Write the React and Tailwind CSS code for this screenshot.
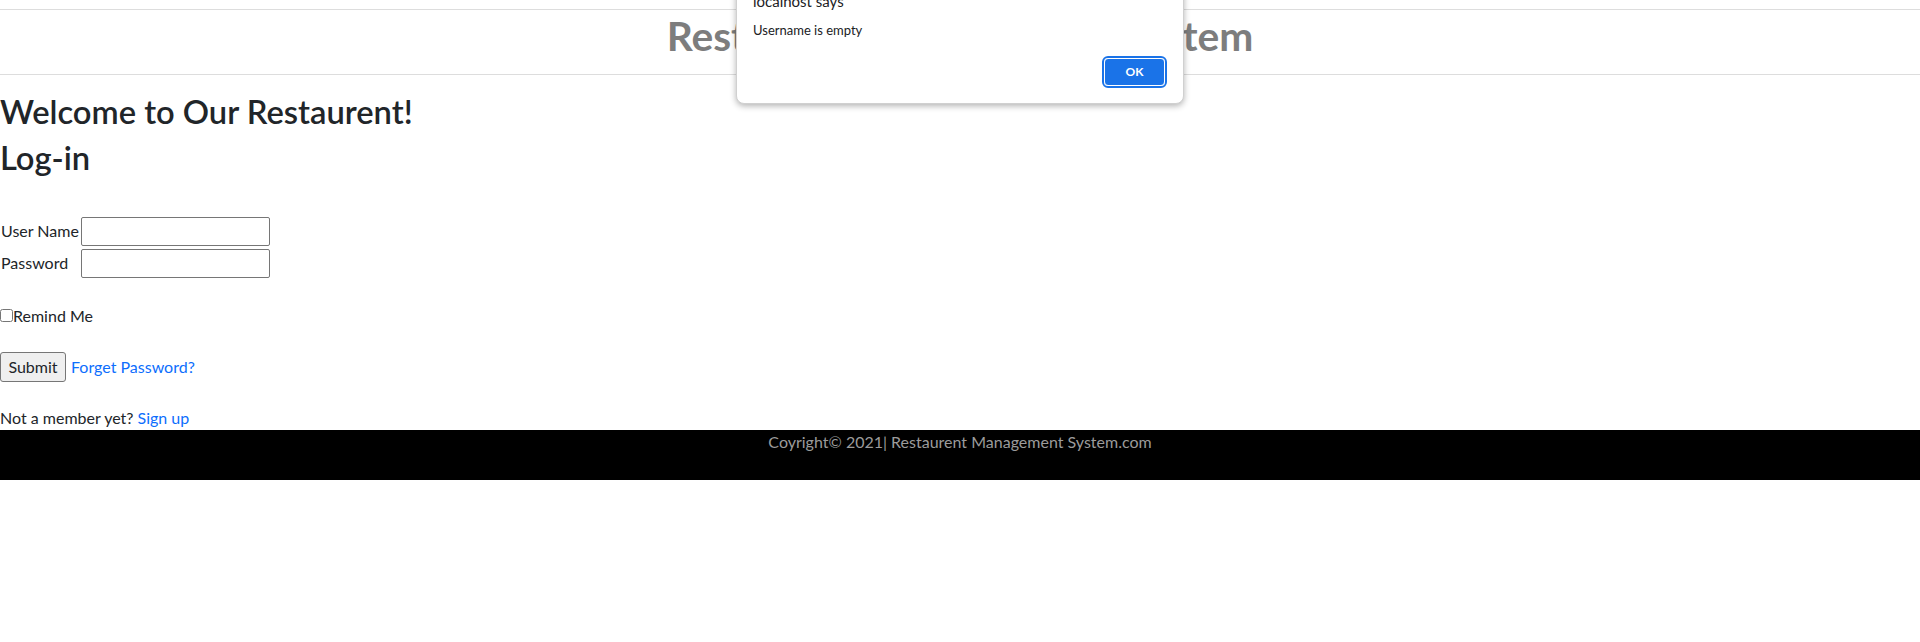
import { useState } from 'react';

// ── Alert dialog (browser "localhost says") ───────────────────────────────────

function AlertDialog() {
  return (
    <div className="absolute left-[736px] top-[-26px] w-[448px] rounded-b-[8px] bg-white border border-[#d0d0d0] shadow-[0_2px_6px_rgba(0,0,0,0.3)] pt-4 pb-[15px] px-4 font-['Lato',sans-serif]">
      <p className="text-[15px] leading-[20px] text-[#202124]">localhost says</p>
      <p className="mt-[10px] text-[13px] leading-[18px] text-[#202124]">Username is empty</p>
      <div className="flex justify-end mt-[17px]">
        <div className="w-[65px] h-[32px] rounded-[6px] border-2 border-[#1a73e8]">
          <button className="w-full h-full rounded-[4px] border border-white bg-[#1a73e8] text-white text-[12px] font-bold">
            OK
          </button>
        </div>
      </div>
    </div>
  );
}

// ── Page ──────────────────────────────────────────────────────────────────────

export default function App() {
  const [remind, setRemind] = useState(false);

  return (
    <div className="relative flow-root min-h-screen bg-white text-[#212529] font-['Lato',sans-serif] text-[16px]">
      {/* Header */}
      <div className="mt-[9px] border-y border-[#dddddd]">
        <h1 className="text-center text-[40.7px] leading-[48px] font-bold text-[#7d7d7d] pt-[2px] pb-[14px]">
          Restaurent Management System
        </h1>
      </div>

      {/* Login */}
      <div className="pt-[18px]">
        <h2 className="text-[32.7px] leading-[38.4px] font-semibold mb-2">Welcome to Our Restaurent!</h2>
        <h2 className="text-[32.7px] leading-[38.4px] font-semibold">Log-in</h2>

        <div className="mt-[39px] grid grid-cols-[81px_189px] gap-y-[3px] items-center w-fit">
          <label className="pl-[1px] leading-6">User Name</label>
          <input type="text" className="h-[29px] border border-[#767676] rounded-[2px] px-1" />
          <label className="pl-[1px] leading-6">Password</label>
          <input type="password" className="h-[29px] border border-[#767676] rounded-[2px] px-1" />
        </div>

        <div className="mt-[26px] flex items-center leading-6">
          <input
            type="checkbox"
            checked={remind}
            onChange={(e) => setRemind(e.target.checked)}
            className="m-0 w-[13px] h-[13px]"
          />
          <span>Remind Me</span>
        </div>

        <div className="mt-[24px] flex items-center gap-[5px]">
          <button className="w-[66px] h-[30px] bg-[#efefef] border border-[#767676] rounded-[3px] text-[16px]">
            Submit
          </button>
          <a href="#" className="text-[#0d6efd] leading-6">Forget Password?</a>
        </div>

        <p className="mt-[24px] leading-6">
          Not a member yet? <a href="#" className="text-[#0d6efd]">Sign up</a>
        </p>
      </div>

      {/* Footer */}
      <div className="h-[50px] bg-black text-center leading-6 text-[#9b9b9b]">
        Coyright© 2021| Restaurent Management System.com
      </div>

      <AlertDialog />
    </div>
  );
}
